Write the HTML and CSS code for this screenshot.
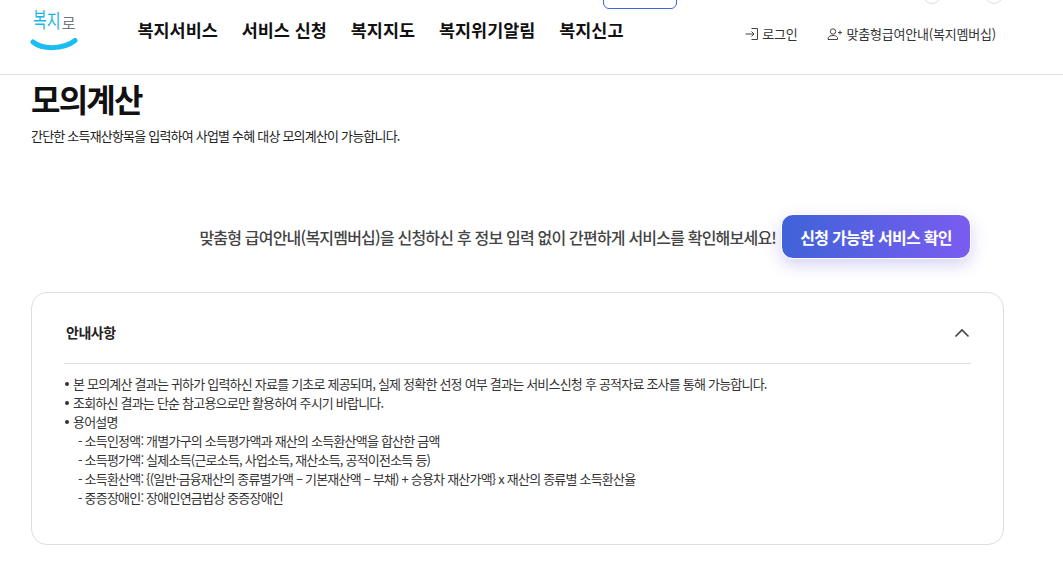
FILE: index.html
```html
<!DOCTYPE html>
<html lang="ko">
<head>
<meta charset="utf-8">
<title>모의계산</title>
<link rel="stylesheet" href="styles.css">
</head>
<body>
<header class="header">
  <span class="top-pill"></span>
  <span class="top-circle top-circle-a"></span>
  <span class="top-circle top-circle-b"></span>
  <a class="logo">
    <span class="logo-text"><span class="logo-a">복</span><span class="logo-b">지</span><span class="logo-c">로</span></span>
    <svg class="logo-smile" width="48" height="14" viewBox="0 0 48 14"><path d="M3 4C12 11.500 33 12 45 2.500" fill="none" stroke="#19bdf2" stroke-width="5" stroke-linecap="round"/></svg>
  </a>
  <nav class="nav">
    <a>복지서비스</a><a>서비스 신청</a><a>복지지도</a><a>복지위기알림</a><a>복지신고</a>
  </nav>
  <div class="util">
    <a class="util-link">
      <svg width="14" height="14" viewBox="0 0 14 14" fill="none" stroke="#444" stroke-width="1"><path d="M0.500 7H9M6.500 4.500L9 7L6.500 9.500M6.500 1.500H12.500V12.500H6.500"/></svg>
      로그인
    </a>
    <a class="util-link util-link-wide">
      <svg width="15" height="14" viewBox="0 0 15 14" fill="none" stroke="#444" stroke-width="1"><circle cx="6" cy="4.500" r="2.700"/><path d="M1 12.500C1 9.500 3 8.500 6 8.500C8 8.500 9.500 9 10.500 10.500V12.500ZM11 5.500H15M13 3.500V7.500"/></svg>
      맞춤형급여안내(복지멤버십)
    </a>
  </div>
</header>
<main class="main">
  <h1 class="title">모의계산</h1>
  <p class="subtitle">간단한 소득재산항목을 입력하여 사업별 수혜 대상 모의계산이 가능합니다.</p>
  <div class="promo">
    <span class="promo-text">맞춤형 급여안내(복지멤버십)을 신청하신 후 정보 입력 없이 간편하게 서비스를 확인해보세요!</span>
    <a class="promo-btn">신청 가능한 서비스 확인</a>
  </div>
  <section class="card">
    <div class="card-head">
      <h2 class="card-title">안내사항</h2>
      <svg class="chevron" width="16" height="10" viewBox="0 0 16 10" fill="none" stroke="#444" stroke-width="1.600"><path d="M1.500 8.500L8 2L14.500 8.500"/></svg>
    </div>
    <ul class="notes">
      <li>본 모의계산 결과는 귀하가 입력하신 자료를 기초로 제공되며, 실제 정확한 선정 여부 결과는 서비스신청 후 공적자료 조사를 통해 가능합니다.</li>
      <li>조회하신 결과는 단순 참고용으로만 활용하여 주시기 바랍니다.</li>
      <li>용어설명
        <div class="term">- 소득인정액: 개별가구의 소득평가액과 재산의 소득환산액을 합산한 금액</div>
        <div class="term">- 소득평가액: 실제소득(근로소득, 사업소득, 재산소득, 공적이전소득 등)</div>
        <div class="term">- 소득환산액: {(일반·금융재산의 종류별가액 – 기본재산액 – 부채) + 승용차 재산가액} x 재산의 종류별 소득환산율</div>
        <div class="term">- 중증장애인: 장애인연금법상 중증장애인</div>
      </li>
    </ul>
  </section>
</main>
</body>
</html>
```
FILE: styles.css
```css
* { box-sizing: border-box; }
html, body { margin: 0; padding: 0; }
body {
  width: 1063px;
  height: 562px;
  overflow: hidden;
  background: #fff;
  color: #333;
  font-family: "Noto Sans CJK KR", "Noto Sans", sans-serif;
}
.header {
  position: relative;
  height: 75px;
  border-bottom: 1px solid #e0e0e0;
  display: flex;
  padding-left: 30px;
}
.top-pill {
  position: absolute;
  left: 603px;
  top: -10px;
  width: 74px;
  height: 19px;
  border: 1px solid #3f63d8;
  border-radius: 6px;
}
.top-circle {
  position: absolute;
  top: -14px;
  width: 18px;
  height: 18px;
  border: 1px solid #ddd;
  border-radius: 50%;
}
.top-circle-a { left: 923px; }
.top-circle-b { left: 985px; }
.logo {
  width: 48px;
  display: flex;
  flex-direction: column;
  padding-top: 10px;
}
.logo-text {
  display: flex;
  align-items: flex-end;
  height: 24px;
  padding-left: 3px;
  white-space: nowrap;
  font-weight: 400;
  line-height: 22px;
}
.logo-a, .logo-b {
  display: inline-block;
  font-size: 15px;
  color: #18b5e8;
  transform-origin: bottom;
  transform: scaleY(1.4);
}
.logo-b { transform: scaleY(1.3); }
.logo-c { font-size: 15px; color: #6f7880; margin-left: 1px; }
.logo-smile { margin-top: 4px; }
.nav {
  display: flex;
  gap: 24px;
  margin-left: 59.500px;
  padding-top: 18px;
  font-size: 17.450px;
  line-height: 24px;
  font-weight: 700;
  color: #111;
}
.util {
  display: flex;
  gap: 30px;
  margin-left: auto;
  margin-right: 67px;
  padding-top: 24px;
  font-size: 13px;
  line-height: 20px;
  color: #333;
  letter-spacing: -0.2px;
}
.util-link { display: flex; align-items: center; gap: 3px; height: 20px; font-weight: 400; }
.util-link-wide { gap: 4px; }
.main { padding: 0 60px 0 31px; }
.title {
  margin: 1px 0 0;
  font-size: 32px;
  line-height: 44px;
  font-weight: 700;
  color: #111;
  letter-spacing: -1.800px;
}
.subtitle {
  margin: 7px 0 0;
  font-size: 13px;
  line-height: 18px;
  letter-spacing: -0.8px;
  color: #222;
  font-weight: 400;
}
.promo {
  display: flex;
  justify-content: flex-end;
  align-items: center;
  gap: 5px;
  margin-top: 69px;
  padding-right: 32px;
}
.promo-text {
  font-size: 16px;
  font-weight: 500;
  color: #444;
  letter-spacing: -0.8px;
  white-space: nowrap;
}
.promo-btn {
  width: 190px;
  height: 45px;
  display: flex;
  align-items: center;
  justify-content: center;
  border: 1px solid #fff;
  border-radius: 12px;
  background: linear-gradient(90deg, #3f63d8, #7a5cf0);
  box-shadow: 0 6px 16px rgba(90, 80, 220, 0.25);
  color: #fff;
  font-size: 16px;
  font-weight: 700;
  letter-spacing: -0.7px;
}
.card {
  margin-top: 33px;
  width: 973px;
  height: 253px;
  border: 1px solid #ddd;
  border-radius: 16px;
  padding: 0 32px;
}
.card-head {
  height: 71px;
  display: flex;
  align-items: center;
  justify-content: space-between;
  border-bottom: 1px solid #ddd;
  padding: 8px 0 0 2px;
}
.card-title {
  margin: 0;
  font-size: 14px;
  font-weight: 700;
  color: #222;
  letter-spacing: -0.5px;
}
.chevron { margin-top: 2px; margin-right: 1px; }
.notes {
  list-style: none;
  margin: 10px 0 0;
  padding: 0 0 0 9px;
  font-size: 13px;
  line-height: 19px;
  letter-spacing: -0.79px;
  color: #333;
  font-weight: 400;
}
.notes li { position: relative; }
.notes li::before {
  content: "";
  position: absolute;
  left: -8px;
  top: 8px;
  width: 4px;
  height: 4px;
  border-radius: 50%;
  background: #333;
}
.term { padding-left: 5px; }
```
